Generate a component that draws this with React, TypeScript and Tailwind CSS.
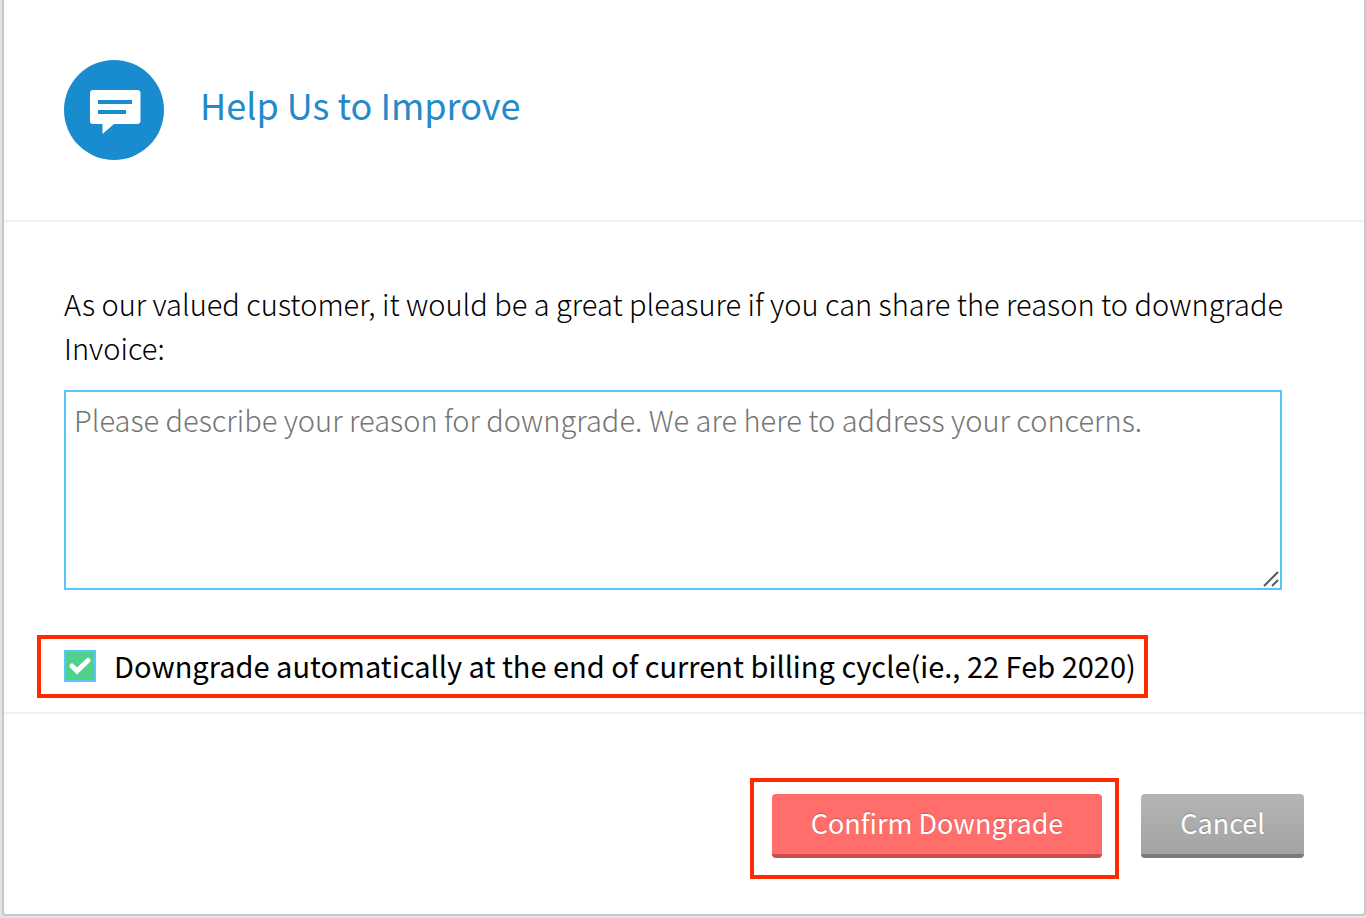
import React, { useState } from 'react';

const FeedbackIcon = () => (
  <svg viewBox="0 0 100 100" className="h-[100px] w-[100px] shrink-0" aria-hidden="true">
    <circle cx="50" cy="50" r="50" fill="#198bcf" />
    <path
      d="M29 30H73Q76.500 30 76.500 33V61Q76.500 64 73 64H50L38.500 74V64H29Q26 64 26 61V33Q26 30 29 30Z"
      fill="#fff"
    />
    <path d="M34 42H68M34 52H62" stroke="#198bcf" strokeWidth="4" />
  </svg>
);

const App = () => {
  const [reason, setReason] = useState('');
  const [atCycleEnd, setAtCycleEnd] = useState(true);

  return (
    <div className="min-h-screen bg-[#e4e4e4] pb-0.5 pl-0.5 font-['Noto_Sans_CJK_SC',sans-serif] text-black">
      <main className="rounded-b-sm border-x-2 border-b-2 border-[#c8c8c8] bg-white">
        <header className="flex items-center gap-9 border-b-2 border-[#f1f1f1] px-[60px] py-[60px]">
          <FeedbackIcon />
          <h1 className="pb-3 text-[36px] leading-[44px] text-[#248ac9]">Help Us to Improve</h1>
        </header>

        <section className="border-b-2 border-[#f1f1f1] pt-[59px] pb-3.5 pl-[60px]">
          <label htmlFor="reason" className="block pr-10 text-[29px] leading-[44px] font-light">
            As our valued customer, it would be a great pleasure if you can share the reason to
            downgrade Invoice:
          </label>
          <div className="relative mt-[21px] mr-[82px]">
            <textarea
              id="reason"
              value={reason}
              onChange={(e) => setReason(e.target.value)}
              placeholder="Please describe your reason for downgrade. We are here to address your concerns."
              className="block h-[200px] w-full resize-none border-2 border-[#57c7fb] px-2 py-[5px] text-[29px] leading-[44px] font-light outline-none placeholder:text-[#757575]"
            />
            <svg
              viewBox="0 0 16 16"
              className="pointer-events-none absolute right-[3px] bottom-[3px] h-4 w-4"
              aria-hidden="true"
            >
              <path d="M1 15L15 1M9 15L15 9" stroke="#5a5a5a" strokeWidth="2" />
            </svg>
          </div>

          <div className="mt-[45px] -ml-[27px] flex w-fit items-center border-4 border-[#ff2a00] pt-[5px] pr-2 pb-[7px] pl-[23px]">
            <span className="relative h-8 w-8 shrink-0">
              <input
                id="cycle-end"
                type="checkbox"
                checked={atCycleEnd}
                onChange={(e) => setAtCycleEnd(e.target.checked)}
                className="block h-8 w-8 appearance-none border-2 border-[#57c7fb] bg-white checked:bg-[#4fd18b]"
              />
              {atCycleEnd && (
                <svg
                  viewBox="0 0 32 32"
                  className="pointer-events-none absolute inset-0 h-8 w-8"
                  aria-hidden="true"
                >
                  <path
                    d="M8 16L13 21L24 10.500"
                    fill="none"
                    stroke="#fff"
                    strokeWidth="5"
                    strokeLinecap="round"
                  />
                </svg>
              )}
            </span>
            <label htmlFor="cycle-end" className="pl-[18px] text-[29px] leading-[43px]">
              Downgrade automatically at the end of current billing cycle(ie., 22 Feb 2020)
            </label>
          </div>
        </section>

        <footer className="flex items-start justify-end gap-[22px] pt-16 pr-[60px] pb-[35px]">
          <div className="border-4 border-[#ff2a00] pt-3 pr-[13px] pb-[17px] pl-[18px]">
            <button
              type="button"
              className="block h-16 rounded-sm border-b-4 border-[#c94d4d] bg-[#ff6e6b] px-[39px] pb-0.5 text-[27px] leading-[58px] text-white [text-shadow:0_-1px_1px_#0003]"
            >
              Confirm Downgrade
            </button>
          </div>
          <button
            type="button"
            className="mt-4 block h-16 rounded-sm border-b-4 border-[#7a7a7a] bg-linear-to-b from-[#b5b5b5] to-[#a3a3a3] px-[39px] pb-0.5 text-[27px] leading-[58px] text-white [text-shadow:0_-1px_1px_#0003]"
          >
            Cancel
          </button>
        </footer>
      </main>
    </div>
  );
};

export default App;
